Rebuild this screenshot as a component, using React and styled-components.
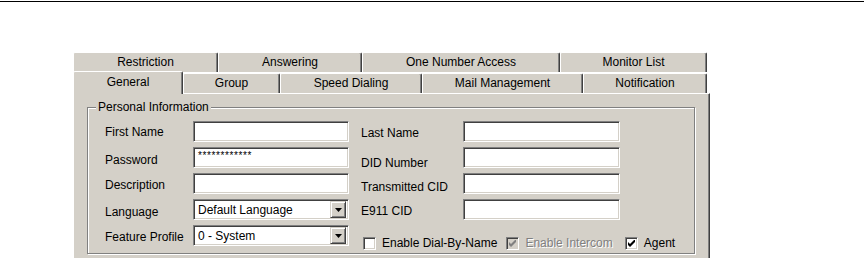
import React from 'react';
import styled, { createGlobalStyle } from 'styled-components';

const GlobalStyle = createGlobalStyle`
  html, body {
    margin: 0;
    padding: 0;
    overflow: hidden;
    background: #fff;
  }
  body {
    font-family: 'Liberation Sans', Arial, sans-serif;
    font-size: 12px;
    color: #000;
  }
`;

const Page = styled.div`
  width: 864px;
  height: 258px;
  padding-top: 1px;
  box-sizing: border-box;
`;

const Rule = styled.div`
  height: 1px;
  background: #000;
`;

const Dialog = styled.div`
  margin: 50px 0 0 73px;
  width: 637px;
`;

const TabRow = styled.div`
  display: flex;
  align-items: flex-end;
  height: ${(p) => (p.$front ? 21 : 20)}px;
  position: relative;
  z-index: ${(p) => (p.$front ? 2 : 1)};
`;

const Tab = styled.div`
  box-sizing: border-box;
  flex: none;
  width: ${(p) => p.$w}px;
  height: ${(p) => (p.$active ? 23 : 20)}px;
  margin-bottom: ${(p) => (p.$active ? -1 : 0)}px;
  background: #d4d0c8;
  border-top: 1px solid #fff;
  border-left: 1px solid #fff;
  border-right: 1px solid #404040;
  border-radius: 2px 2px 0 0;
  box-shadow: inset -1px 0 #808080;
  display: flex;
  align-items: center;
  justify-content: center;
  padding-bottom: ${(p) => (p.$active ? 3 : 1)}px;
  white-space: nowrap;
`;

const Panel = styled.div`
  box-sizing: border-box;
  width: 637px;
  height: 165px;
  background: #d4d0c8;
  border-top: 1px solid #fff;
  border-left: 1px solid #fff;
  border-right: 1px solid #404040;
  box-shadow: inset -1px 0 #808080;
  padding: 6px 0 0 13px;
`;

const Group = styled.fieldset`
  box-sizing: border-box;
  width: 608px;
  min-width: 0;
  margin: 0;
  padding: 7px 0 7px 17px;
  border: 1px solid #808080;
  box-shadow: inset 1px 1px #fff, 1px 1px #fff;
`;

const Legend = styled.legend`
  margin-left: -9px;
  padding: 0 2px;
  line-height: 14px;
  background: #d4d0c8;
`;

const Form = styled.div`
  display: grid;
  grid-template-columns: 88px 156px 12px 102px 157px;
  grid-template-rows: repeat(5, 21px);
  row-gap: 5px;
`;

const Label = styled.span`
  grid-column: ${(p) => (p.$right ? 4 : 1)};
  align-self: start;
  padding-top: ${(p) => p.$top}px;
  line-height: 14px;
  white-space: nowrap;
`;

const Field = styled.div`
  box-sizing: border-box;
  height: 21px;
  background: #fff;
  border-top: 1px solid #808080;
  border-left: 1px solid #808080;
  border-right: 1px solid #fff;
  border-bottom: 1px solid #fff;
  box-shadow: inset 1px 1px #404040, inset -1px -1px #d4d0c8;
  display: flex;
  align-items: center;
  padding: 0 2px 0 4px;
  white-space: nowrap;
`;

const Mask = styled.span`
  align-self: flex-start;
  margin-top: 3px;
  font-size: 10px;
  line-height: 10px;
  letter-spacing: 0.6px;
`;

const SelectText = styled.span`
  flex: 1;
  padding-top: 1px;
`;

const DropButton = styled.span`
  box-sizing: border-box;
  width: 16px;
  height: 17px;
  flex: none;
  background: #d4d0c8;
  border-top: 1px solid #d4d0c8;
  border-left: 1px solid #d4d0c8;
  border-right: 1px solid #404040;
  border-bottom: 1px solid #404040;
  box-shadow: inset 1px 1px #fff, inset -1px -1px #808080;
  display: flex;
  align-items: center;
  justify-content: center;
`;

const CheckRow = styled.div`
  grid-column: 4 / span 2;
  display: flex;
  align-items: center;
  margin: 11px 0 0 2px;
  height: 14px;
  white-space: nowrap;
`;

const CheckItem = styled.label`
  display: flex;
  align-items: center;
  gap: 6px;
  margin-left: ${(p) => p.$ml || 0}px;
  color: ${(p) => (p.$disabled ? '#808080' : '#000')};
  text-shadow: ${(p) => (p.$disabled ? '1px 1px 0 #fff' : 'none')};
  line-height: 14px;
`;

const Box = styled.span`
  box-sizing: border-box;
  width: 13px;
  height: 13px;
  flex: none;
  background: ${(p) => (p.$disabled ? '#d4d0c8' : '#fff')};
  border-top: 1px solid #808080;
  border-left: 1px solid #808080;
  border-right: 1px solid #fff;
  border-bottom: 1px solid #fff;
  box-shadow: inset 1px 1px #404040, inset -1px -1px #d4d0c8;
  display: flex;
  align-items: center;
  justify-content: center;
`;

const Check = ({ color }) => (
  <svg width="7" height="7" viewBox="0 0 7 7">
    <polygon points="0,2 2,4 7,-1 7,2 2,7 0,5" fill={color} />
  </svg>
);

const Arrow = () => (
  <svg width="7" height="4" viewBox="0 0 7 4">
    <polygon points="0,0 7,0 3.5,4" fill="#000" />
  </svg>
);

const CheckBox = ({ checked, disabled, label, ml }) => (
  <CheckItem $disabled={disabled} $ml={ml}>
    <Box $disabled={disabled}>
      {checked && <Check color={disabled ? '#808080' : '#000'} />}
    </Box>
    {label}
  </CheckItem>
);

const Select = ({ value }) => (
  <Field style={{ paddingRight: 2 }}>
    <SelectText>{value}</SelectText>
    <DropButton>
      <Arrow />
    </DropButton>
  </Field>
);

const backTabs = [
  ['Restriction', 145],
  ['Answering', 144],
  ['One Number Access', 198],
  ['Monitor List', 147],
];

const frontTabs = [
  ['General', 110],
  ['Group', 97],
  ['Speed Dialing', 142],
  ['Mail Management', 161],
  ['Notification', 124],
];

export default function App() {
  return (
    <Page>
      <GlobalStyle />
      <Rule />
      <Dialog>
        <TabRow>
          {backTabs.map(([name, w]) => (
            <Tab key={name} $w={w}>
              {name}
            </Tab>
          ))}
        </TabRow>
        <TabRow $front>
          {frontTabs.map(([name, w], i) => (
            <Tab key={name} $w={w} $active={i === 0}>
              {name}
            </Tab>
          ))}
        </TabRow>
        <Panel>
          <Group>
            <Legend>Personal Information</Legend>
            <Form>
              <Label $top={4}>First Name</Label>
              <Field />
              <Label $right $top={5}>Last Name</Label>
              <Field />

              <Label $top={6}>Password</Label>
              <Field>
                <Mask>************</Mask>
              </Field>
              <Label $right $top={9}>DID Number</Label>
              <Field />

              <Label $top={5}>Description</Label>
              <Field />
              <Label $right $top={7}>Transmitted CID</Label>
              <Field />

              <Label $top={6}>Language</Label>
              <Select value="Default Language" />
              <Label $right $top={5}>E911 CID</Label>
              <Field />

              <Label $top={5}>Feature Profile</Label>
              <Select value="0 - System" />
              <CheckRow>
                <CheckBox label="Enable Dial-By-Name" />
                <CheckBox label="Enable Intercom" checked disabled ml={9} />
                <CheckBox label="Agent" checked ml={12} />
              </CheckRow>
            </Form>
          </Group>
        </Panel>
      </Dialog>
    </Page>
  );
}
